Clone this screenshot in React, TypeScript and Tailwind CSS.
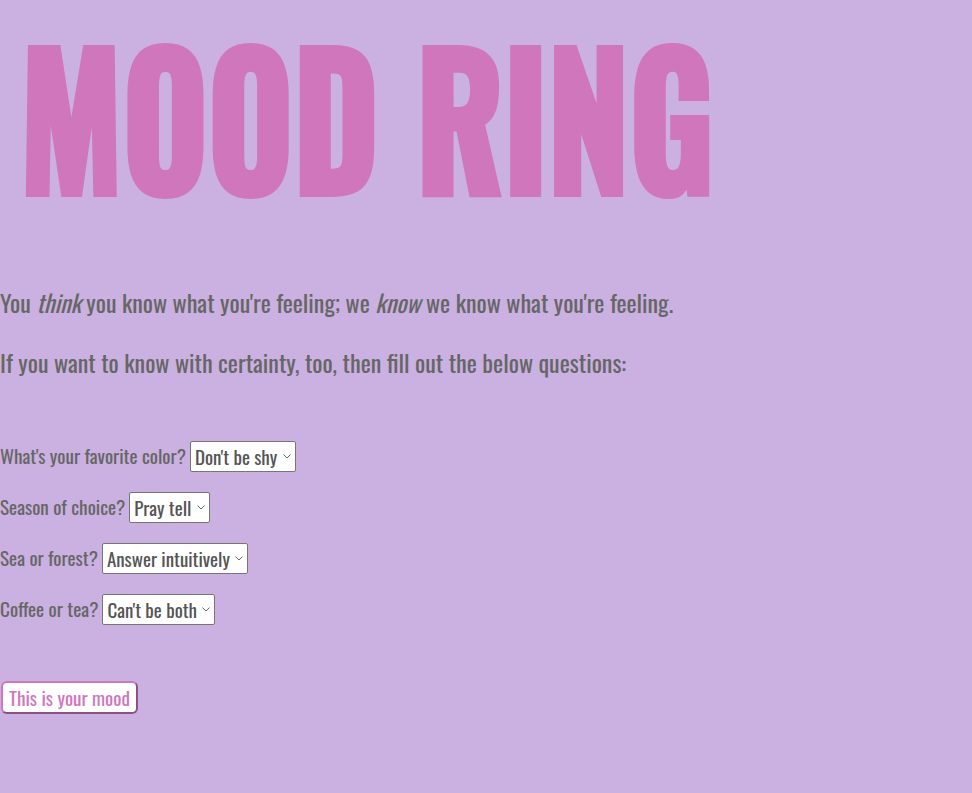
const questions = [
  { label: "What's your favorite color?", placeholder: "Don't be shy" },
  { label: "Season of choice?", placeholder: "Pray tell" },
  { label: "Sea or forest?", placeholder: "Answer intuitively" },
  { label: "Coffee or tea?", placeholder: "Can't be both" },
];

export default function App() {
  return (
    <div className="min-h-screen bg-[#cab1e1] font-['Oswald',sans-serif] text-[#666]">
      <h1 className="whitespace-nowrap pl-5 pt-[23px] text-[180px] font-bold leading-none text-[#d076bc] uppercase">
        <span className="inline-block origin-left scale-x-[0.81] [-webkit-text-stroke:6px_#d076bc]">
          Mood Ring
        </span>
      </h1>

      <p className="mt-[81px] text-[24px] leading-9">
        You <em>think</em> you know what you're feeling; we <em>know</em> we know what you're feeling.
      </p>
      <p className="mt-6 text-[24px] leading-9">
        If you want to know with certainty, too, then fill out the below questions:
      </p>

      <form className="mt-[61px] flex flex-col gap-5">
        {questions.map((q) => (
          <div key={q.label} className="flex items-center gap-1 text-[19.2px]">
            <label>{q.label}</label>
            <div className="relative">
              <select className="h-[31px] appearance-none rounded-[2px] border border-[#767676] bg-white pl-[4px] pr-[17px] text-[19px] text-[#555]">
                <option>{q.placeholder}</option>
              </select>
              <svg
                className="pointer-events-none absolute right-[5px] top-[13px]"
                width="8"
                height="5"
                viewBox="0 0 8 5"
                fill="none"
              >
                <path d="M0.5 0.5 L4 4 L7.5 0.5" stroke="#666" strokeWidth="1" />
              </svg>
            </div>
          </div>
        ))}

        <div className="mt-9">
          <button
            type="button"
            className="ml-px rounded-md border-2 border-[#d076bc] border-r-[#8e5083] border-b-[#8e5083] bg-white px-1.5 text-[19.2px] leading-[29px] text-[#d076bc]"
          >
            This is your mood
          </button>
        </div>
      </form>
    </div>
  );
}
